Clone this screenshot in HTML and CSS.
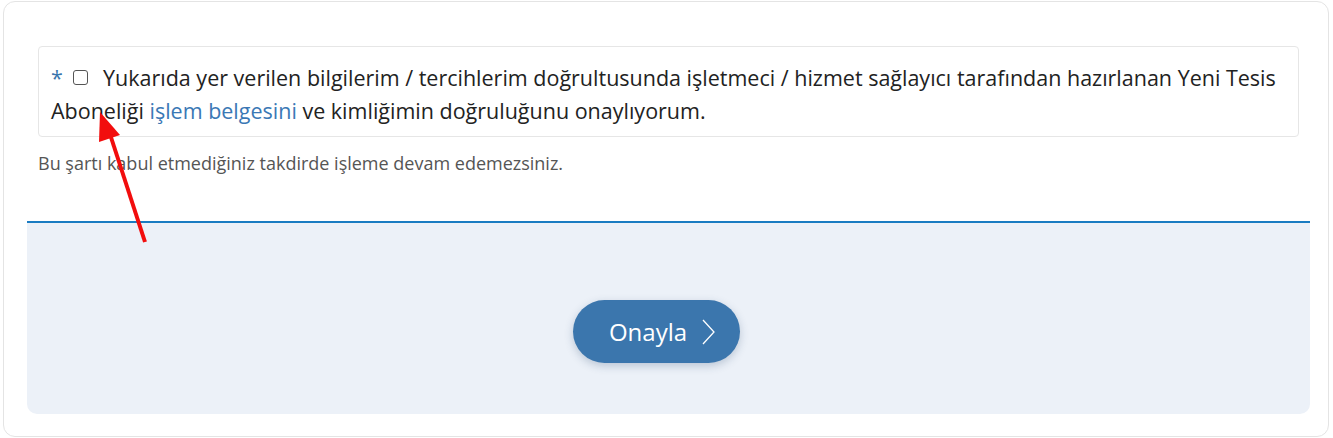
FILE: index.html
```html
<!DOCTYPE html>
<html>
<head>
    <meta charset="utf-8">
    <title>Yeni Tesis Aboneliği</title>
    <link rel="stylesheet" href="styles.css">
</head>
<body>
    <div class="card">
        <div class="terms">
            <div class="terms-box">
                <span class="req">*</span>
                <span class="cb"></span>
                Yukarıda yer verilen bilgilerim / tercihlerim doğrultusunda işletmeci / hizmet sağlayıcı tarafından hazırlanan Yeni Tesis Aboneliği <a href="#">işlem belgesini</a> ve kimliğimin doğruluğunu onaylıyorum.
            </div>
            <p class="hint">Bu şartı kabul etmediğiniz takdirde işleme devam edemezsiniz.</p>
        </div>
        <div class="foot">
            <button type="button" class="btn">Onayla
                <svg width="14" height="26" viewBox="0 0 14 26"><path d="M2 1 L13 13 L2 25" fill="none" stroke="#fff" stroke-width="1.3"/></svg>
            </button>
        </div>
    </div>
    <!-- annotation arrow -->
    <svg class="arrow" width="1333" height="438" viewBox="0 0 1333 438">
        <line x1="145" y1="242" x2="108" y2="128" stroke="#f20d0d" stroke-width="4"/>
        <polygon points="100,112 99,142 120,135" fill="#f20d0d"/>
    </svg>
</body>
</html>
```

FILE: styles.css
```css
html, body { margin: 0; padding: 0; background: #fff; }
body { padding: 1px 3px 0 3px; font-family: "Open Sans", "Noto Sans", sans-serif; color: #222; }
.card { width: 1326px; height: 436px; box-sizing: border-box; border: 1px solid #e4e4e4; border-radius: 12px; padding: 44px 18px 0 23px; }
.terms { padding: 0 11px; height: 175px; }
.terms-box { border: 1px solid #e6e6e6; border-radius: 4px; padding: 14px 12px 10px 12px; font-size: 21.5px; line-height: 33px; height: 91px; box-sizing: border-box; }
.req { color: #3b76ad; margin-right: 5px; }
.cb { display: inline-block; width: 13px; height: 13px; border: 1.5px solid #555; border-radius: 3px; margin-right: 9px; vertical-align: 1px; }
.terms-box a { color: #3a78b5; text-decoration: none; }
.hint { margin: 14px 0 0 0; font-size: 18px; color: #555; }
.foot { border-top: 2px solid #1a7cc2; background: #ecf1f8; border-radius: 0 0 10px 10px; height: 193px; box-sizing: border-box; display: flex; justify-content: center; align-items: flex-start; padding: 77px 25px 0 0; }
.btn { width: 167px; height: 63px; border: 0; border-radius: 32px; background: #3b76ad; color: #fff; font-family: "Open Sans", sans-serif; font-size: 24px; display: flex; align-items: center; justify-content: center; gap: 14px; padding: 0 0 0 12px; box-shadow: 0 3px 8px rgba(40, 70, 110, 0.25); }
.arrow { position: absolute; left: 0; top: 0; pointer-events: none; }
```
